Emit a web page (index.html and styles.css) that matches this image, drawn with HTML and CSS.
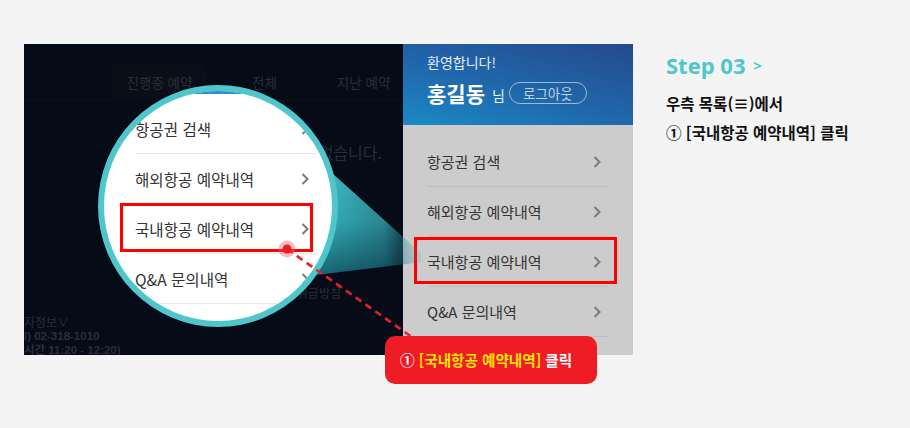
FILE: index.html
```html
<!DOCTYPE html>
<html lang="ko">
<head>
<meta charset="utf-8">
<title>Step 03</title>
<link rel="stylesheet" href="styles.css">
</head>
<body>
<div class="page">
  <div class="stage">
    <div class="shot">
      <div class="tabs">
        <span class="tab tab-on">진행중 예약</span>
        <span class="tab tab-all">전체</span>
        <span class="tab tab-past">지난 예약</span>
      </div>
      <p class="empty">예약하신 내역이 없습니다.</p>
      <p class="policy">개인정보취급방침</p>
      <div class="info">
        <span class="info-1">자정보∨</span>
        <span class="info-2">l) 02-318-1010</span>
        <span class="info-3">시간 11:20 - 12:20)</span>
      </div>
    </div>

    <div class="panel">
      <div class="head">
        <p class="hello">환영합니다!</p>
        <div class="who">
          <strong class="name">홍길동</strong><span class="sir">님</span><span class="logout">로그아웃</span>
        </div>
      </div>
      <ul class="menu">
        <li class="item"><span>항공권 검색</span><svg class="chev" viewBox="0 0 8 12"><polyline points="1.5,1 6.5,6 1.5,11"/></svg></li>
        <li class="item"><span>해외항공 예약내역</span><svg class="chev" viewBox="0 0 8 12"><polyline points="1.5,1 6.5,6 1.5,11"/></svg></li>
        <li class="item item-hit"><span>국내항공 예약내역</span><svg class="chev" viewBox="0 0 8 12"><polyline points="1.5,1 6.5,6 1.5,11"/></svg><i class="hitbox"></i></li>
        <li class="item"><span>Q&amp;A 문의내역</span><svg class="chev" viewBox="0 0 8 12"><polyline points="1.5,1 6.5,6 1.5,11"/></svg></li>
      </ul>
    </div>

    <svg class="cone" viewBox="0 0 609 311" width="609" height="311">
      <defs>
        <linearGradient id="coneBody" gradientUnits="userSpaceOnUse" x1="0" y1="110" x2="0" y2="234">
          <stop offset="0" stop-color="#46c4cb"/>
          <stop offset="0.55" stop-color="#34aeb8"/>
          <stop offset="1" stop-color="#14606e"/>
        </linearGradient>
        <linearGradient id="coneFade" gradientUnits="userSpaceOnUse" x1="300" y1="0" x2="400" y2="0">
          <stop offset="0" stop-color="#fff" stop-opacity="1"/>
          <stop offset="0.6" stop-color="#fff" stop-opacity="0.75"/>
          <stop offset="1" stop-color="#fff" stop-opacity="0"/>
        </linearGradient>
        <mask id="coneMask" maskUnits="userSpaceOnUse" x="0" y="0" width="609" height="311">
          <rect x="0" y="0" width="609" height="311" fill="url(#coneFade)"/>
        </mask>
      </defs>
      <polygon points="268,93 398,210 398,218 268,234" fill="url(#coneBody)" mask="url(#coneMask)"/>
    </svg>

    <div class="lens">
      <div class="lens-band"></div>
      <ul class="menu menu-lens">
        <li class="item"><span>항공권 검색</span><svg class="chev" viewBox="0 0 8 12"><polyline points="1.5,1 6.5,6 1.5,11"/></svg></li>
        <li class="item"><span>해외항공 예약내역</span><svg class="chev" viewBox="0 0 8 12"><polyline points="1.5,1 6.5,6 1.5,11"/></svg></li>
        <li class="item item-hit"><span>국내항공 예약내역</span><svg class="chev" viewBox="0 0 8 12"><polyline points="1.5,1 6.5,6 1.5,11"/></svg><i class="hitbox"></i></li>
        <li class="item"><span>Q&amp;A 문의내역</span><svg class="chev" viewBox="0 0 8 12"><polyline points="1.5,1 6.5,6 1.5,11"/></svg></li>
      </ul>
    </div>

    <svg class="pointer" viewBox="0 0 609 311" width="609" height="311">
      <line x1="263" y1="205" x2="392" y2="296" stroke="#e8202a" stroke-width="2.6" stroke-dasharray="7 5"/>
      <circle cx="263" cy="205" r="8.5" fill="#f05a64" fill-opacity="0.4"/>
      <circle cx="263" cy="205" r="4.5" fill="#e61e2a"/>
    </svg>

    <div class="callout"><span class="num">①</span> <span class="hl">[국내항공 예약내역]</span> 클릭</div>
  </div>

  <div class="step">
    <h2 class="step-title">Step 03 <span class="gt">&gt;</span></h2>
    <p class="step-line">우측 목록(≡)에서</p>
    <p class="step-line">① [국내항공 예약내역] 클릭</p>
  </div>
</div>
</body>
</html>
```

FILE: styles.css
```css
* { box-sizing: border-box; }
html, body { margin: 0; padding: 0; }
body {
  background: #f4f4f4;
  font-family: "Noto Sans CJK KR", "Noto Sans", sans-serif;
  width: 910px;
  height: 428px;
  overflow: hidden;
}
p, h2, ul { margin: 0; padding: 0; }
ul { list-style: none; }

.page {
  display: flex;
  align-items: flex-start;
  padding: 44px 0 0 24px;
}

.stage {
  position: relative;
  display: flex;
  width: 609px;
  height: 311px;
  flex: none;
}

/* dark background screenshot */
.shot {
  width: 379px;
  height: 311px;
  background: #060b18;
  overflow: hidden;
  display: flex;
  flex-direction: column;
  color: #2a2e37;
}
.tabs {
  margin-top: 20px;
  height: 37px;
  display: flex;
  align-items: center;
  border-bottom: 1px solid #0d111c;
  font-size: 13.5px;
  white-space: nowrap;
}
.tab { line-height: 37px; }
.tab-on {
  margin-left: 88px;
  width: 95px;
  text-align: center;
  background: #0a0e19;
  border-radius: 6px 6px 0 0;
}
.tab-all { margin-left: 45px; }
.tab-past { margin-left: 60px; }
.empty {
  margin-top: 39px;
  font-size: 16px;
  line-height: 24px;
  text-align: right;
  padding-right: 21px;
  white-space: nowrap;
}
.policy {
  margin-top: 121px;
  font-size: 12px;
  line-height: 16px;
  text-align: right;
  padding-right: 62px;
}
.info {
  margin-top: 13px;
  display: flex;
  flex-direction: column;
  font-size: 11.5px;
  line-height: 15px;
  font-family: "Liberation Sans", "Noto Sans CJK KR", sans-serif;
  font-weight: bold;
  white-space: nowrap;
}
.info-1 { font-size: 12px; font-weight: normal; font-family: "Noto Sans CJK KR", sans-serif; }
.info-3 { line-height: 13px; }

/* right menu panel */
.panel {
  width: 230px;
  height: 311px;
  background: #cccccc;
  display: flex;
  flex-direction: column;
}
.head {
  height: 81px;
  padding: 9px 0 0 24px;
  background: linear-gradient(15deg, #1a8ac6 0%, #2067ab 45%, #254a8c 100%);
  color: #fff;
}
.hello {
  font-size: 14px;
  line-height: 18px;
  color: #e3ecf7;
}
.who {
  margin-top: 11px;
  display: flex;
  align-items: center;
  height: 22px;
  white-space: nowrap;
}
.name {
  font-size: 21px;
  font-weight: 700;
  line-height: 22px;
}
.sir {
  font-size: 14px;
  margin-left: 7px;
  margin-top: 4px;
  color: #eef3fa;
}
.logout {
  margin-left: 4px;
  width: 78px;
  height: 22px;
  border: 1px solid rgba(255,255,255,0.55);
  border-radius: 11px;
  font-size: 13.5px;
  line-height: 20px;
  text-align: center;
  color: rgba(255,255,255,0.72);
}

.menu {
  margin: 12px 0 0 24px;
  width: 181px;
}
.item {
  position: relative;
  height: 50px;
  border-bottom: 1px solid #bdbdbd;
  display: flex;
  align-items: center;
  justify-content: space-between;
  font-size: 15px;
  color: #333;
  white-space: nowrap;
}
.chev {
  width: 8px;
  height: 12px;
  margin-right: 7px;
  fill: none;
  stroke: #7a7a7a;
  stroke-width: 2;
}
.hitbox {
  position: absolute;
  left: -13px;
  right: -9px;
  top: 0;
  bottom: 2px;
  border: 3px solid #ff0000;
}

/* cone */
.cone {
  position: absolute;
  left: 0;
  top: 0;
  pointer-events: none;
}

/* magnifier lens */
.lens {
  position: absolute;
  left: 74px;
  top: 41px;
  width: 240px;
  height: 242px;
  border-radius: 50%;
  border: 6px solid #4fc6cc;
  background: #fff;
  overflow: hidden;
}
.lens-band {
  height: 3px;
  background: #2d8fd4;
}
.menu-lens {
  margin: 10px 0 0 31px;
  width: 181px;
}
.menu-lens .item {
  font-size: 15.6px;
  border-bottom-color: #e8e8e8;
}
.menu-lens .chev { margin-right: 7px; }
.menu-lens .hitbox {
  left: -15px;
  right: 3px;
  top: -1px;
  bottom: 1px;
}

.pointer {
  position: absolute;
  left: 0;
  top: 0;
  pointer-events: none;
}

.callout {
  position: absolute;
  left: 361px;
  top: 292px;
  width: 212px;
  height: 48px;
  border-radius: 10px;
  background: #ee1c25;
  color: #fff;
  font-size: 14.6px;
  font-weight: 700;
  line-height: 48px;
  padding-left: 15px;
  white-space: nowrap;
}
.callout .hl { color: #ffe600; }

/* step text */
.step {
  margin-left: 33px;
  color: #111;
}
.step-title {
  margin-top: 7px;
  font-family: "Open Sans", "Noto Sans", sans-serif;
  font-size: 22px;
  font-weight: 700;
  line-height: 28px;
  color: #4fc6cc;
  white-space: nowrap;
}
.gt {
  font-size: 15px;
  margin-left: 2px;
  vertical-align: 3px;
}
.step-line {
  font-size: 15.5px;
  font-weight: 700;
  line-height: 20px;
  margin-top: 9px;
  white-space: nowrap;
}
.step-title + .step-line { margin-top: 14px; }
```
